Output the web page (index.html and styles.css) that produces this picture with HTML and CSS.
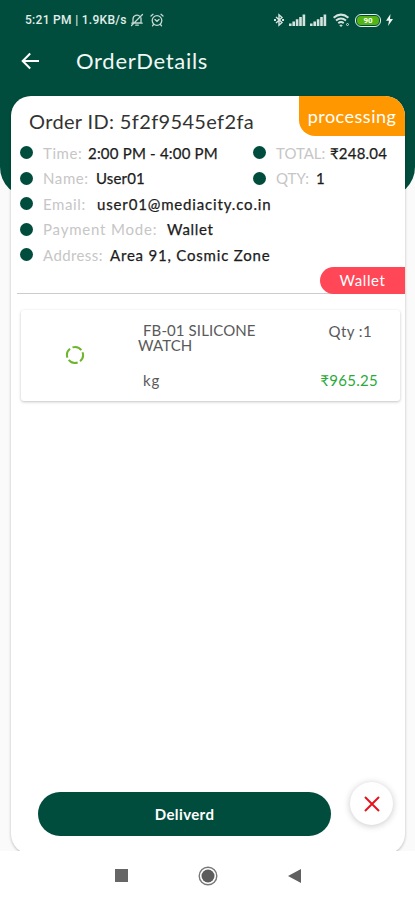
FILE: index.html
```html
<!DOCTYPE html>
<html lang="en">
<head>
<meta charset="UTF-8">
<meta name="viewport" content="width=device-width, initial-scale=1.0">
<title>OrderDetails</title>
<link rel="stylesheet" href="styles.css">
</head>
<body>

<div class="screen">
  <div class="header-bg"></div>

  <!-- Status bar -->
  <div class="status-bar">
    <span class="clock">5:21 PM | 1.9KB/s</span>
    <svg class="mute" width="14" height="14" viewBox="0 0 14 14" fill="none" stroke="#c5d9d3" stroke-width="1.3" stroke-linecap="round">
      <path d="M3 10V6a4 4 0 0 1 7-2.4M11 5v5H4.5M1.8 10.2H3M11 10.2h1.2M5.8 12.2h2.5M1.5 12.5l11-11"/>
    </svg>
    <svg class="alarm" width="14" height="14" viewBox="0 0 14 14" fill="none" stroke="#c5d9d3" stroke-width="1.3" stroke-linecap="round">
      <circle cx="7" cy="7.5" r="4.8"/>
      <path d="M1 3l2-1.7M13 3l-2-1.7M5 6.5l2 1.8 2-1.8M3.5 11.5l-1 1.3M10.5 11.5l1 1.3"/>
    </svg>
    <div class="status-right">
      <svg width="10" height="14" viewBox="0 0 10 14" fill="none" stroke="#d5e3df" stroke-width="1.4">
        <path d="M2 4l6 5.5-3 2.7V1.8l3 2.7L2 10"/>
        <path d="M0 7h2M8 7h2" stroke-width="1.8"/>
      </svg>
      <svg class="signal" width="17" height="12" viewBox="0 0 17 12" fill="#d5e3df">
        <path d="M0 9.5h2.6V12H0zM3.4 7.5H6V12H3.4zM6.8 5.3h2.6V12H6.8zM10.2 3h2.6v9h-2.6zM13.6.5h2.6V12h-2.6z"/>
      </svg>
      <svg class="signal" width="17" height="12" viewBox="0 0 17 12" fill="#d5e3df">
        <path d="M0 9.5h2.6V12H0zM3.4 7.5H6V12H3.4zM6.8 5.3h2.6V12H6.8zM10.2 3h2.6v9h-2.6zM13.6.5h2.6V12h-2.6z"/>
      </svg>
      <svg class="wifi" width="17" height="14" viewBox="0 0 17 14" fill="none" stroke="#d5e3df" stroke-width="2">
        <path d="M.6 4.800Q8-1.500 15.400 4.800M3 7.500q5-4 10 0M5.300 10.100q2.700-2 5.400 0"/>
        <path d="M7 12.200h2v.8H7z" stroke-width="1"/>
        <circle cx="14.500" cy="11.500" r="1" stroke-width="1"/>
      </svg>
      <span class="battery"><span>90</span></span>
      <svg class="bolt" width="7" height="12" viewBox="0 0 7 12" fill="#eef5f2"><path d="M4.500 0L0 6.800h3L2 12l5-7H4z"/></svg>
    </div>
  </div>

  <!-- App bar -->
  <div class="app-bar">
    <svg width="18" height="18" viewBox="0 0 18 18" fill="none" stroke="#fff" stroke-width="2">
      <path d="M18 9H2M9.200 1.500L1.700 9l7.500 7.500"/>
    </svg>
    <h1>OrderDetails</h1>
  </div>

  <!-- Order card -->
  <div class="card">
    <div class="card-top">
      <h2>Order ID: 5f2f9545ef2fa</h2>
      <span class="badge">processing</span>
    </div>

    <div class="details">
      <div class="row">
        <div class="cell cell-left"><i class="dot"></i><span class="label time">Time:</span><span class="value time-value">2:00 PM - 4:00 PM</span></div>
        <div class="cell"><i class="dot"></i><span class="label total">TOTAL:</span><span class="value total-value">₹248.04</span></div>
      </div>
      <div class="row">
        <div class="cell cell-left"><i class="dot"></i><span class="label name">Name:</span><span class="value name-value">User01</span></div>
        <div class="cell"><i class="dot"></i><span class="label qty">QTY:</span><span class="value">1</span></div>
      </div>
      <div class="row">
        <div class="cell"><i class="dot"></i><span class="label email">Email:</span><span class="value email-value">user01@mediacity.co.in</span></div>
      </div>
      <div class="row">
        <div class="cell"><i class="dot"></i><span class="label payment">Payment Mode:</span><span class="value wallet-value">Wallet</span></div>
      </div>
      <div class="row">
        <div class="cell"><i class="dot"></i><span class="label address">Address:</span><span class="value address-value">Area 91, Cosmic Zone</span></div>
      </div>
    </div>

    <div class="divider">
      <span class="wallet">Wallet</span>
    </div>

    <div class="product">
      <div class="thumb">
        <svg width="20" height="20" viewBox="0 0 20 20" fill="none" stroke="#6fb52c" stroke-width="2">
          <circle cx="10" cy="10" r="8" stroke-dasharray="9.800 2.766" transform="rotate(-20 10 10)"/>
        </svg>
      </div>
      <div class="product-info">
        <p class="product-name">FB-01 SILICONE WATCH</p>
        <p class="unit">kg</p>
      </div>
      <div class="product-side">
        <p class="product-qty">Qty :1</p>
        <p class="price">₹965.25</p>
      </div>
    </div>

    <div class="actions">
      <button class="deliver-btn">Deliverd</button>
      <button class="cancel-btn">
        <svg width="16" height="16" viewBox="0 0 16 16" stroke="#e5141c" stroke-width="2"><path d="M1 1l14 14M15 1L1 15"/></svg>
      </button>
    </div>
  </div>

  <!-- Android navigation -->
  <div class="nav-bar">
    <svg width="13" height="13" viewBox="0 0 13 13"><path d="M0 0h13v13H0z" fill="#666"/></svg>
    <svg width="20" height="20" viewBox="0 0 20 20"><circle cx="10" cy="10" r="8.800" fill="none" stroke="#777" stroke-width="1.400"/><circle cx="10" cy="10" r="6.500" fill="#5c5c5c"/></svg>
    <svg width="13" height="14" viewBox="0 0 13 14"><path d="M13 0v14L0 7z" fill="#606060"/></svg>
  </div>
</div>

</body>
</html>
```
FILE: styles.css
```css
:root {
  --green: #004d3d;
  --orange: #ff9800;
  --red: #ff4757;
}
* {
  box-sizing: border-box;
}
body {
  margin: 0;
  font-family: Lato, "Noto Sans", sans-serif;
  background: #fafafa;
  color: #222;
}
h1, h2, p {
  margin: 0;
  font-weight: 400;
}
svg {
  display: block;
  flex: none;
}
button {
  border: none;
  padding: 0;
  font-family: inherit;
}
.screen {
  position: relative;
  display: flex;
  flex-direction: column;
  height: 900px;
  overflow: hidden;
}
/* green backdrop behind the card */
.header-bg {
  position: absolute;
  top: 0;
  left: 0;
  right: 0;
  height: 197px;
  background: var(--green);
  border-radius: 0 0 30px 30px;
}
.status-bar {
  position: relative;
  display: flex;
  align-items: center;
  height: 40px;
  padding: 0 22px 0 25px;
}
.clock {
  width: 105px;
  font: 500 12px Roboto, sans-serif;
  letter-spacing: 0.3px;
  color: #e3eeea;
  white-space: nowrap;
}
.alarm {
  margin-left: 6px;
}
.status-right {
  display: flex;
  align-items: center;
  margin-left: auto;
}
.signal {
  margin-left: 5px;
  margin-right: -1px;
}
.wifi {
  margin-left: 7px;
}
.battery {
  display: flex;
  width: 26px;
  height: 13px;
  margin-left: 5px;
  padding: 1px;
  border: 1px solid #e0f0e8;
  border-radius: 6px;
}
.battery span {
  flex: 1;
  background: #53b414;
  border-radius: 4px;
  color: #fff;
  font: 700 8px/9px Roboto, sans-serif;
  text-align: center;
}
.bolt {
  margin-left: 5px;
}
.app-bar {
  position: relative;
  display: flex;
  align-items: center;
  height: 42px;
  padding-left: 21px;
  gap: 37px;
}
.app-bar h1 {
  padding-bottom: 2px;
  font-size: 22px;
  color: #f2f7f5;
  letter-spacing: 0.7px;
}
.card {
  position: relative;
  display: flex;
  flex-direction: column;
  flex: none;
  width: 394px;
  height: 758px;
  margin: 14px 0 0 11px;
  background: #fff;
  border-radius: 20px;
  box-shadow: 0 1px 3px rgba(0,0,0,0.26);
}
.card-top {
  display: flex;
  justify-content: space-between;
  height: 44px;
  padding-left: 18px;
}
.card-top h2 {
  font-size: 20px;
  line-height: 51px;
  letter-spacing: 0.35px;
  color: #333;
}
.badge {
  width: 106px;
  height: 40px;
  background: var(--orange);
  border-radius: 0 20px 0 16px;
  color: #fff;
  font-size: 18px;
  line-height: 40px;
  text-align: center;
  letter-spacing: 0.5px;
}
.details {
  padding-left: 9px;
}
.row {
  display: flex;
  height: 25.5px;
}
.cell {
  display: flex;
  align-items: center;
  font-size: 15px;
  white-space: nowrap;
}
.cell-left {
  width: 233px;
}
.dot {
  width: 13px;
  height: 13px;
  margin-right: 10px;
  background: var(--green);
  border-radius: 50%;
}
.label {
  color: #c6c6c6;
  letter-spacing: 0.6px;
}
.value {
  color: #1c1c1c;
  -webkit-text-stroke: 0.25px #1c1c1c;
}
.time { width: 45px; }
.name { width: 53px; }
.email { width: 54px; }
.payment { width: 124px; letter-spacing: 0.8px; }
.address { width: 67px; letter-spacing: 0.4px; }
.total { width: 54px; letter-spacing: 0; }
.qty { width: 40px; letter-spacing: 0; }
.time-value { letter-spacing: 0.2px; }
.total-value { letter-spacing: 0.2px; }
.name-value { letter-spacing: 0.15px; }
.email-value { letter-spacing: 0.85px; }
.wallet-value { letter-spacing: 0.7px; }
.address-value { letter-spacing: 0.8px; }
.divider {
  display: flex;
  justify-content: flex-end;
  height: 27px;
  margin: -1px 0 0 6px;
  border-bottom: 1px solid #ccc;
}
.wallet {
  width: 85px;
  height: 27px;
  background: var(--red);
  border-radius: 14px 0 0 14px;
  color: #fff;
  font-size: 15px;
  line-height: 26px;
  text-align: center;
  letter-spacing: 0.6px;
}
.product {
  display: flex;
  height: 91px;
  margin: 16px 5px 1px 10px;
  border-radius: 3px;
  box-shadow: 0 1px 3px rgba(0,0,0,0.24);
  color: #5a5a5a;
  font-size: 15px;
}
.thumb {
  display: flex;
  align-items: center;
  justify-content: center;
  width: 107px;
}
.product-info {
  width: 150px;
  padding: 13px 0 0 10px;
}
.product-name {
  width: 130px;
  line-height: 15px;
  text-indent: 5px;
  letter-spacing: 0.1px;
}
.unit {
  margin: 18px 0 0 5px;
  letter-spacing: 0.8px;
}
.product-side {
  flex: 1;
  padding: 12px 22px 0 0;
  text-align: right;
}
.product-qty {
  padding-right: 6px;
  letter-spacing: 0.4px;
}
.price {
  margin-top: 31px;
  color: #2baa3b;
  letter-spacing: 0.3px;
}
.actions {
  display: flex;
  margin: auto 0 18px 27px;
  gap: 19px;
}
.deliver-btn {
  width: 293px;
  height: 44px;
  background: var(--green);
  border-radius: 22px;
  color: #fff;
  font-size: 15px;
  font-weight: 700;
  letter-spacing: 0.4px;
}
.cancel-btn {
  display: flex;
  align-items: center;
  justify-content: center;
  width: 43px;
  height: 43px;
  margin-top: -10px;
  background: #fff;
  border-radius: 50%;
  box-shadow: 0 1px 7px rgba(0,0,0,0.22);
}
.nav-bar {
  position: absolute;
  left: 0;
  right: 0;
  bottom: 0;
  display: flex;
  align-items: center;
  height: 49px;
  padding-left: 115px;
  gap: 70px;
  background: #fff;
}
```
